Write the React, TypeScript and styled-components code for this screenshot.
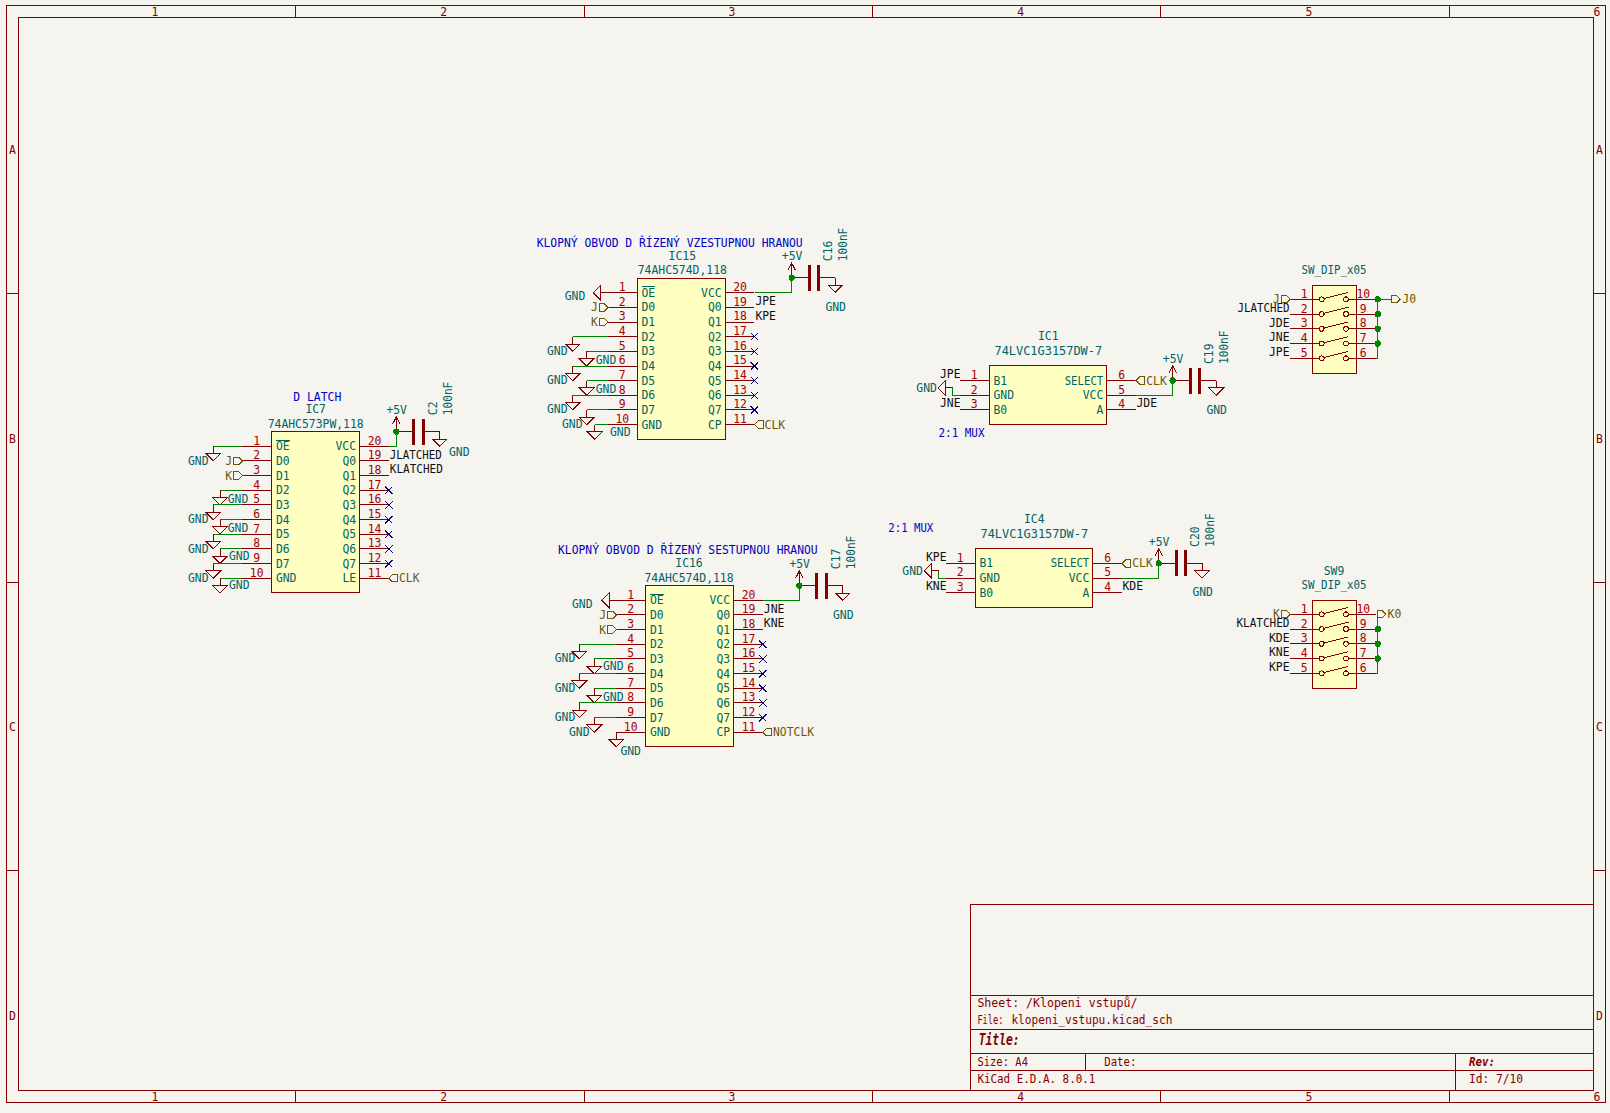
import React from "react";
import styled, { createGlobalStyle } from "styled-components";

const INK = "#840000";
const WIRE = "#008400";
const STEP = 14.66;
const PIN = 29.3;

const Global = createGlobalStyle`
  html, body { margin: 0; padding: 0; background: #f5f4ef; overflow: hidden; }
`;

const Sheet = styled.svg`
  display: block;
  width: 1610px;
  height: 1113px;
  background: #f5f4ef;
  shape-rendering: crispEdges;
`;

const tones: Record<string, string> = {
  ink: INK,
  teal: "#006464",
  number: "#a90000",
  net: "#0f0f0f",
  hier: "#725600",
  note: "#0000c2",
};

const Label = styled.text<{ $tone: string; $size?: number; $strong?: boolean }>`
  font-family: "DejaVu Sans Mono", "Liberation Mono", monospace;
  font-size: ${(p) => p.$size ?? 11.4}px;
  font-weight: ${(p) => (p.$strong ? 700 : 400)};
  font-style: ${(p) => (p.$strong ? "italic" : "normal")};
  fill: ${(p) => tones[p.$tone]};
`;

const Stroke = styled.path<{ $color?: string; $w?: number }>`
  fill: none;
  stroke: ${(p) => p.$color ?? INK};
  stroke-width: ${(p) => p.$w ?? 1}px;
`;

const Body = styled.rect`
  fill: #ffffc2;
  stroke: ${INK};
  stroke-width: 1px;
`;

const Dot = styled.circle`
  fill: ${WIRE};
`;

const Contact = styled.circle`
  fill: none;
  stroke: ${INK};
  stroke-width: 1px;
`;

const HierFlag = styled.polygon`
  fill: none;
  stroke: ${tones.hier};
  stroke-width: 1px;
`;

/* widths measured on the reference, where the stroke font is not monospaced */
const fitted: Record<string, number> = {
  JLATCHED: 52,
  KLATCHED: 53,
  SELECT: 38.6,
  SW_DIP_x05: 65,
  "100nF": 33.5,
  "74LVC1G3157DW-7": 107.6,
};

type TP = {
  x: number;
  y: number;
  tone?: string;
  a?: "start" | "middle" | "end";
  rot?: boolean;
  len?: number;
  size?: number;
  strong?: boolean;
  children: React.ReactNode;
};

const T = ({ x, y, tone = "teal", a = "middle", rot, len, size, strong, children }: TP) => {
  const width = len ?? (typeof children === "string" ? fitted[children] : undefined);
  return (
    <Label
      x={x}
      y={y + 4}
      $tone={tone}
      $size={size}
      $strong={strong}
      textAnchor={a}
      transform={rot ? `rotate(-90 ${x} ${y})` : undefined}
      textLength={width}
      lengthAdjust={width ? "spacingAndGlyphs" : undefined}
    >
      {children}
    </Label>
  );
};

const Wire = ({ d }: { d: string }) => <Stroke d={d} $color={WIRE} />;

const Gnd = ({ x, y }: { x: number; y: number }) => (
  <Stroke d={`M${x} ${y}V${y + 7.33}M${x - 7.33} ${y + 7.33}H${x + 7.33}L${x} ${y + 14.66}Z`} />
);

const GndLeft = ({ x, y }: { x: number; y: number }) => (
  <Stroke d={`M${x} ${y}H${x - 7.33}M${x - 7.33} ${y - 7.33}V${y + 7.33}L${x - 14.66} ${y}Z`} />
);

const NoConnect = ({ x, y }: { x: number; y: number }) => (
  <Stroke d={`M${x - 3.7} ${y - 3.7}L${x + 3.7} ${y + 3.7}M${x - 3.7} ${y + 3.7}L${x + 3.7} ${y - 3.7}`} $color="#000084" />
);

const Hier = ({ x, y, dir, text }: { x: number; y: number; dir: 1 | -1; text?: string }) => {
  const pts = [
    [x, y],
    [x - 3.66 * dir, y - 3.66],
    [x - 8.7 * dir, y - 3.66],
    [x - 8.7 * dir, y + 3.66],
    [x - 3.66 * dir, y + 3.66],
  ]
    .map((p) => p.join(","))
    .join(" ");
  return (
    <>
      <HierFlag points={pts} />
      {text && (
        <T x={x - 10.2 * dir} y={y} tone="hier" a={dir === 1 ? "end" : "start"}>
          {text}
        </T>
      )}
    </>
  );
};

const HierOut = ({ x, y, text }: { x: number; y: number; text: string }) => (
  <>
    <Hier x={x + 8.7} y={y} dir={1} />
    <T x={x + 10.6} y={y} tone="hier" a="start">
      {text}
    </T>
  </>
);

type SupplyP = {
  j: number;
  y: number;
  cap: string;
  gndX?: number;
  gndY?: number;
};

const Supply = ({ j, y, cap, gndX, gndY }: SupplyP) => {
  const g = j + 43.5;
  return (
    <>
      <Stroke d={`M${j} ${y}V${y - 14.7}M${j - 3.6} ${y - 7.7}L${j} ${y - 14.7}L${j + 3.6} ${y - 7.7}`} />
      <T x={j + 0.4} y={y - 21.7}>+5V</T>
      <Stroke d={`M${j} ${y}H${j + 17}M${j + 27} ${y}H${g}`} />
      <Stroke d={`M${j + 17.6} ${y - 13}V${y + 13}M${j + 26.8} ${y - 13}V${y + 13}`} $w={3} />
      <Gnd x={g} y={y} />
      <T x={gndX ?? g + 0.5} y={gndY ?? y + 29}>GND</T>
      <T x={j + 36.6} y={y - 16.5} a="start" rot>{cap}</T>
      <T x={j + 51.4} y={y - 16.5} a="start" rot>100nF</T>
      <Dot cx={j} cy={y} r={3.2} />
    </>
  );
};

type IcP = {
  x: number;
  y: number;
  w: number;
  left: [string, string][];
  right: [string, string][];
  overline?: boolean;
};

const Ic = ({ x, y, w, left, right, overline }: IcP) => {
  const rows = Math.max(left.length, right.length);
  const rx = x + w;
  return (
    <>
      <Body x={x} y={y - STEP} width={w} height={STEP * (rows + 1)} />
      {left.map(([num, name], i) => {
        const ry = y + i * STEP;
        return (
          <g key={num}>
            <Stroke d={`M${x} ${ry}H${x - PIN}`} />
            <T x={x - 15} y={ry - 5.6} tone="number">{num}</T>
            <T x={x + 4.2} y={ry} a="start">{name}</T>
          </g>
        );
      })}
      {right.map(([num, name], i) => {
        const ry = y + i * STEP;
        return (
          <g key={num}>
            <Stroke d={`M${rx} ${ry}H${rx + PIN}`} />
            <T x={rx + 15} y={ry - 5.6} tone="number">{num}</T>
            <T x={rx - 3.4} y={ry} a="end">{name}</T>
          </g>
        );
      })}
      {overline && <Stroke d={`M${x + 4.2} ${y - 5.8}H${x + 18}`} $color={tones.teal} />}
    </>
  );
};

const latchLeft: [string, string][] = [
  ["1", "OE"], ["2", "D0"], ["3", "D1"], ["4", "D2"], ["5", "D3"],
  ["6", "D4"], ["7", "D5"], ["8", "D6"], ["9", "D7"], ["10", "GND"],
];
const latchRight = (last: string): [string, string][] => [
  ["20", "VCC"], ["19", "Q0"], ["18", "Q1"], ["17", "Q2"], ["16", "Q3"],
  ["15", "Q4"], ["14", "Q5"], ["13", "Q6"], ["12", "Q7"], ["11", last],
];

type GndRow = [number, number, number, number];

const Latch = ({
  x, y, last, rows, q0, q1, clk,
}: {
  x: number;
  y: number;
  last: string;
  rows: GndRow[];
  q0: string;
  q1: string;
  clk: string;
}) => {
  const end = x + 87.8 + PIN;
  const lx = x - PIN;
  const r = (i: number) => y + i * STEP;
  return (
    <>
      <Ic x={x} y={y} w={87.8} left={latchLeft} right={latchRight(last)} overline />
      <Hier x={lx} y={r(1)} dir={1} text="J" />
      <Hier x={lx} y={r(2)} dir={1} text="K" />
      {rows.map(([i, gx, tx, ty]) => (
        <g key={i}>
          <Wire d={`M${lx} ${r(i)}H${gx}`} />
          <Gnd x={gx} y={r(i)} />
          <T x={tx} y={ty}>GND</T>
        </g>
      ))}
      <T x={end + 1} y={r(1) - 6.3} tone="net" a="start">{q0}</T>
      <T x={end + 1} y={r(2) - 6.3} tone="net" a="start">{q1}</T>
      {[3, 4, 5, 6, 7, 8].map((i) => (
        <NoConnect key={i} x={end} y={r(i)} />
      ))}
      <Hier x={end} y={r(9)} dir={-1} text={clk} />
    </>
  );
};

const Mux = ({
  x, y, b1, b0, a, ref_, cap,
}: {
  x: number;
  y: number;
  b1: string;
  b0: string;
  a: string;
  ref_: string;
  cap: string;
}) => {
  const w = 117.4;
  const lx = x - PIN;
  const end = x + w + PIN;
  const j = end + 36.7;
  return (
    <>
      <T x={x + 59} y={y - 44.5}>{ref_}</T>
      <T x={x + 59} y={y - 29.5}>74LVC1G3157DW-7</T>
      <Ic
        x={x}
        y={y}
        w={w}
        left={[["1", "B1"], ["2", "GND"], ["3", "B0"]]}
        right={[["6", "SELECT"], ["5", "VCC"], ["4", "A"]]}
      />
      <T x={lx + 0.5} y={y - 6.5} tone="net" a="end">{b1}</T>
      <T x={lx + 0.5} y={y + STEP * 2 - 6.5} tone="net" a="end">{b0}</T>
      <Wire d={`M${lx} ${y + STEP}H${lx - 7.3}V${y + 7.33}`} />
      <GndLeft x={lx - 7.3} y={y + 7.33} />
      <T x={lx - 33.4} y={y + 7.33}>GND</T>
      <Hier x={end} y={y} dir={-1} text="CLK" />
      <Wire d={`M${end} ${y + STEP}H${j}V${y}`} />
      <T x={end + 0.5} y={y + STEP * 2 - 6.5} tone="net" a="start">{a}</T>
      <Supply j={j} y={y} cap={cap} />
    </>
  );
};

const Dip = ({
  y, first, names, out, far, ref_,
}: {
  y: number;
  first: string;
  names: string[];
  out: string;
  far?: boolean;
  ref_?: string;
}) => {
  const x = 1312.3;
  const w = 44.4;
  const lx = 1290;
  const rx = 1375.7;
  const bus = 1377.7;
  const rows = [0, 1, 2, 3, 4].map((i) => y + i * 14.75);
  return (
    <>
      {ref_ && <T x={1334} y={y - 43.3}>{ref_}</T>}
      <T x={1334} y={y - 29}>SW_DIP_x05</T>
      <Body x={x} y={y - 14.3} width={w} height={88.3} />
      {rows.map((ry, i) => (
        <g key={i}>
          <Stroke d={`M${lx} ${ry}H1319.4M1348.4 ${ry}H${rx}`} />
          <Contact cx={1321.7} cy={ry} r={2.4} />
          <Contact cx={1346} cy={ry} r={2.4} />
          <Stroke d={`M1324.4 ${ry - 1}L1348.4 ${ry - 7}`} />
          <T x={1304.3} y={ry - 5.4} tone="number">{String(i + 1)}</T>
          <T x={1363.3} y={ry - 5.4} tone="number">{String(10 - i)}</T>
          {i > 0 && <T x={1289.5} y={ry - 6.2} tone="net" a="end">{names[i - 1]}</T>}
          {i > 0 && i < 4 && <Dot cx={bus} cy={ry} r={3.2} />}
        </g>
      ))}
      <Hier x={lx} y={rows[0]} dir={1} text={first} />
      <Wire d={`M${rx} ${rows[4]}H${bus}V${rows[0]}`} />
      {far ? (
        <>
          <Wire d={`M${rx} ${rows[0]}H1391.7`} />
          <Dot cx={bus} cy={rows[0]} r={3.2} />
          <HierOut x={1391.7} y={rows[0]} text={out} />
        </>
      ) : (
        <HierOut x={1377} y={rows[0]} text={out} />
      )}
    </>
  );
};

const Frame = () => {
  const xt = [295.5, 584.5, 872.5, 1160.5, 1449.5];
  const yt = [293.5, 582.5, 870.5];
  const xl = [155, 443.6, 732, 1020.6, 1309, 1597];
  const yl: [string, number][] = [["A", 150], ["B", 438.5], ["C", 727], ["D", 1015.5]];
  const ticks = [
    ...xt.map((x) => `M${x} 5.5V17.5M${x} 1090.5V1102.5`),
    ...yt.map((y) => `M6.5 ${y}H18.5M1593.5 ${y}H1605.5`),
  ].join("");
  return (
    <>
      <Stroke d="M6.5 5.5H1605.5V1102.5H6.5ZM18.5 17.5H1593.5V1090.5H18.5Z" />
      <Stroke d={ticks} />
      {xl.map((x, i) => (
        <g key={x}>
          <T x={x} y={11.5} tone="ink">{String(i + 1)}</T>
          <T x={x} y={1096.5} tone="ink">{String(i + 1)}</T>
        </g>
      ))}
      {yl.map(([c, y]) => (
        <g key={c}>
          <T x={12.4} y={y} tone="ink">{c}</T>
          <T x={1599.4} y={y} tone="ink">{c}</T>
        </g>
      ))}
    </>
  );
};

const TitleBlock = () => (
  <>
    <Stroke d="M970.5 1090.5V904.5H1593.5M970.5 995.5H1593.5M970.5 1029.5H1593.5M970.5 1053.5H1593.5M970.5 1070.5H1593.5M1085.5 1053.5V1070.5M1455.5 1053.5V1090.5" />
    <T x={977.4} y={1003.3} tone="ink" a="start" len={160}>Sheet: /Klopeni vstupů/</T>
    <T x={977.4} y={1020} tone="ink" a="start" len={26}>File:</T>
    <T x={1011.4} y={1020} tone="ink" a="start" len={161}>klopeni_vstupu.kicad_sch</T>
    <T x={978.7} y={1041} tone="ink" a="start" size={15.5} strong len={41}>Title:</T>
    <T x={977.4} y={1062.3} tone="ink" a="start" len={50.6}>Size: A4</T>
    <T x={1104.3} y={1062.3} tone="ink" a="start" len={32}>Date:</T>
    <T x={1469} y={1062.3} tone="ink" a="start" strong len={26}>Rev:</T>
    <T x={977.4} y={1078.7} tone="ink" a="start" len={118}>KiCad E.D.A. 8.0.1</T>
    <T x={1469} y={1078.7} tone="ink" a="start" len={54}>Id: 7/10</T>
  </>
);

const ic7Rows: GndRow[] = [
  [0, 213.3, 198.3, 460.7],
  [3, 220, 238, 499.3],
  [4, 213.3, 198.3, 519.3],
  [5, 220, 238, 528],
  [6, 213.3, 198.3, 548.7],
  [7, 220, 239.3, 556],
  [8, 213.3, 198.3, 578],
  [9, 220, 239.3, 584.7],
];
const ic15Rows: GndRow[] = [
  [3, 572.7, 557.3, 351],
  [4, 586.7, 606, 360],
  [5, 572.7, 557.3, 380],
  [6, 586.7, 606, 389],
  [7, 572.7, 557.3, 409.3],
  [8, 586.7, 572.3, 424],
  [9, 594.7, 620.3, 431.7],
];
const ic16Rows: GndRow[] = [
  [3, 579.3, 565, 658.3],
  [4, 594.3, 613.3, 666],
  [5, 579.3, 565, 687.7],
  [6, 594.3, 613.3, 697.3],
  [7, 579.3, 565, 717],
  [8, 594.3, 579.3, 731.7],
];

export default function App() {
  return (
    <>
      <Global />
      <Sheet viewBox="0 0 1610 1113" xmlns="http://www.w3.org/2000/svg">
        <Frame />
        <TitleBlock />

        {/* IC7 */}
        <T x={317.3} y={396.7} tone="note">D LATCH</T>
        <T x={315.7} y={409.3}>IC7</T>
        <T x={315.7} y={424}>74AHC573PW,118</T>
        <Latch x={271.7} y={446.3} last="LE" rows={ic7Rows} q0="JLATCHED" q1="KLATCHED" clk="CLK" />
        <Wire d="M389 446.3H396.3V431.7" />
        <Supply j={396.3} y={431.7} cap="C2" gndX={459.3} gndY={452.3} />

        {/* IC15 */}
        <T x={536.7} y={242.7} tone="note" a="start" len={266}>KLOPNÝ OBVOD D ŘÍZENÝ VZESTUPNOU HRANOU</T>
        <T x={682.3} y={255.7}>IC15</T>
        <T x={682.3} y={270}>74AHC574D,118</T>
        <Latch x={637.3} y={292.7} last="CP" rows={ic15Rows} q0="JPE" q1="KPE" clk="CLK" />
        <GndLeft x={608} y={292.7} />
        <T x={575} y={296}>GND</T>
        <Wire d="M754.6 292.7H791.7V277.7" />
        <Supply j={791.7} y={277.7} cap="C16" />

        {/* IC16 */}
        <T x={558} y={550} tone="note" a="start" len={259.7}>KLOPNÝ OBVOD D ŘÍZENÝ SESTUPNOU HRANOU</T>
        <T x={689} y={563.3}>IC16</T>
        <T x={689} y={577.7}>74AHC574D,118</T>
        <Latch x={645.7} y={600.3} last="CP" rows={ic16Rows} q0="JNE" q1="KNE" clk="NOTCLK" />
        <GndLeft x={616.4} y={600.3} />
        <T x={582.3} y={604}>GND</T>
        <Gnd x={616.4} y={732.2} />
        <T x={630.7} y={751}>GND</T>
        <Wire d="M763 600.3H799.3V585.7" />
        <Supply j={799.3} y={585.7} cap="C17" />

        {/* Multiplexers */}
        <Mux x={989.3} y={380.5} b1="JPE" b0="JNE" a="JDE" ref_="IC1" cap="C19" />
        <T x={938.5} y={433.3} tone="note" a="start" len={46}>2:1 MUX</T>
        <Mux x={975.3} y={563.4} b1="KPE" b0="KNE" a="KDE" ref_="IC4" cap="C20" />
        <T x={888.3} y={528.3} tone="note" a="start" len={45}>2:1 MUX</T>

        {/* DIP switches */}
        <Dip y={299.3} first="J" names={["JLATCHED", "JDE", "JNE", "JPE"]} out="J0" far />
        <Dip y={614.3} first="K" names={["KLATCHED", "KDE", "KNE", "KPE"]} out="K0" ref_="SW9" />
      </Sheet>
    </>
  );
}
